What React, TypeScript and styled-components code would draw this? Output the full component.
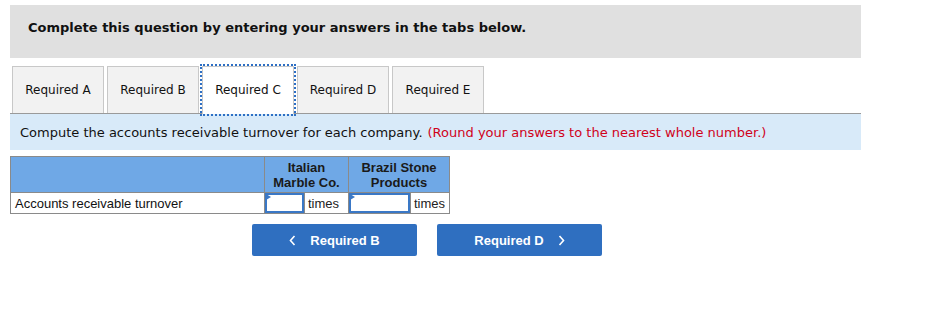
import styled, { createGlobalStyle } from "styled-components";

const GlobalStyle = createGlobalStyle`
  body {
    margin: 0;
    background: #fff;
    font-family: "DejaVu Sans", Verdana, sans-serif;
  }
`;

const PageDiv = styled.div`
  width: 851px;
  padding: 5px 0 0 10px;
`;

const Instructions = styled.div`
  height: 53px;
  background-color: #e0e0e0;
  display: flex;
  align-items: center;
  padding-left: 18px;
  padding-bottom: 8px;
  box-sizing: border-box;
  font-size: 13px;
  font-weight: bold;
  color: #111;
`;

const TabBar = styled.div`
  display: flex;
  gap: 3px;
  margin-top: 8px;
  padding-left: 2px;
  border-bottom: 1px solid #9a9a9a;
`;

const Tab = styled.div<{ $active?: boolean }>`
  box-sizing: border-box;
  width: 92px;
  display: flex;
  align-items: center;
  justify-content: center;
  font-size: 12px;
  color: #111;
  padding-bottom: ${(p) => (p.$active ? "1px" : "0")};
  background-color: ${(p) => (p.$active ? "#fff" : "#f2f2f2")};
  border: 1px solid #c8c8c8;
  border-bottom: none;
  height: ${(p) => (p.$active ? "48px" : "47px")};
  margin-bottom: ${(p) => (p.$active ? "-1px" : "0")};
  outline: ${(p) => (p.$active ? "2px dotted #2d6fc4" : "none")};
  outline-offset: 0px;
`;

const InfoBar = styled.div`
  height: 36px;
  background-color: #d8eaf9;
  display: flex;
  align-items: center;
  padding-left: 10px;
  font-size: 13px;
  color: #111;
`;

const Hint = styled.span`
  color: #d0021b;
  margin-left: 5px;
`;

const Table = styled.table`
  margin-top: 6px;
  border-collapse: collapse;
  font-family: "Liberation Sans", Arial, sans-serif;
`;

const HeadCell = styled.th<{ $w: number }>`
  width: ${(p) => p.$w}px;
  height: 35px;
  padding: 0;
  background-color: #6fa8e6;
  border: 1px solid #8a8a8a;
  font-size: 13px;
  font-weight: bold;
  color: #1a1a1a;
  line-height: 15px;
`;

const LabelCell = styled.td`
  height: 20px;
  padding: 0 4px;
  font-size: 13px;
  color: #111;
  border: 1px solid #8a8a8a;
`;

const ValueCell = styled.td`
  padding: 0;
  border: 1px solid #8a8a8a;
`;

const ValueWrap = styled.div`
  display: flex;
  align-items: stretch;
  height: 20px;
`;

const Input = styled.div<{ $w: number }>`
  position: relative;
  width: ${(p) => p.$w}px;
  box-sizing: border-box;
  border: 2px solid #3a78c6;
  background: #fff;
  &::before {
    content: "";
    position: absolute;
    left: -1px;
    top: -1px;
    border-left: 5px solid #3a78c6;
    border-top: 3px solid transparent;
    border-bottom: 3px solid transparent;
  }
`;

const Unit = styled.div`
  flex: 1;
  display: flex;
  align-items: center;
  padding-left: 3px;
  font-size: 13px;
  color: #222;
  border-left: 1px solid #8a8a8a;
`;

const ButtonRow = styled.div`
  display: flex;
  gap: 20px;
  margin-top: 10px;
  padding-left: 242px;
`;

const NavButton = styled.button`
  width: 165px;
  height: 32px;
  border: none;
  border-radius: 2px;
  background-color: #2f6fc0;
  color: #fff;
  font-family: "Liberation Sans", Arial, sans-serif;
  font-weight: bold;
  font-size: 13px;
  display: flex;
  align-items: center;
  justify-content: center;
  gap: 14px;
`;

const Chevron = ({ dir }: { dir: "left" | "right" }) => (
  <svg width="7" height="11" viewBox="0 0 7 11">
    <path
      d={dir === "left" ? "M5.5 1 L1.5 5.5 L5.5 10" : "M1.5 1 L5.5 5.5 L1.5 10"}
      stroke="#fff"
      strokeWidth="1.6"
      fill="none"
    />
  </svg>
);

const tabs = ["Required A", "Required B", "Required C", "Required D", "Required E"];

export default function App() {
  return (
    <PageDiv>
      <GlobalStyle />
      <Instructions>Complete this question by entering your answers in the tabs below.</Instructions>
      <TabBar>
        {tabs.map((t) => (
          <Tab key={t} $active={t === "Required C"}>
            {t}
          </Tab>
        ))}
      </TabBar>
      <InfoBar>
        Compute the accounts receivable turnover for each company.
        <Hint>(Round your answers to the nearest whole number.)</Hint>
      </InfoBar>
      <Table>
        <thead>
          <tr>
            <HeadCell $w={253} />
            <HeadCell $w={83}>
              Italian
              <br />
              Marble Co.
            </HeadCell>
            <HeadCell $w={100}>
              Brazil Stone
              <br />
              Products
            </HeadCell>
          </tr>
        </thead>
        <tbody>
          <tr>
            <LabelCell>Accounts receivable turnover</LabelCell>
            <ValueCell>
              <ValueWrap>
                <Input $w={39} />
                <Unit>times</Unit>
              </ValueWrap>
            </ValueCell>
            <ValueCell>
              <ValueWrap>
                <Input $w={61} />
                <Unit>times</Unit>
              </ValueWrap>
            </ValueCell>
          </tr>
        </tbody>
      </Table>
      <ButtonRow>
        <NavButton>
          <Chevron dir="left" />
          Required B
        </NavButton>
        <NavButton>
          Required D
          <Chevron dir="right" />
        </NavButton>
      </ButtonRow>
    </PageDiv>
  );
}
